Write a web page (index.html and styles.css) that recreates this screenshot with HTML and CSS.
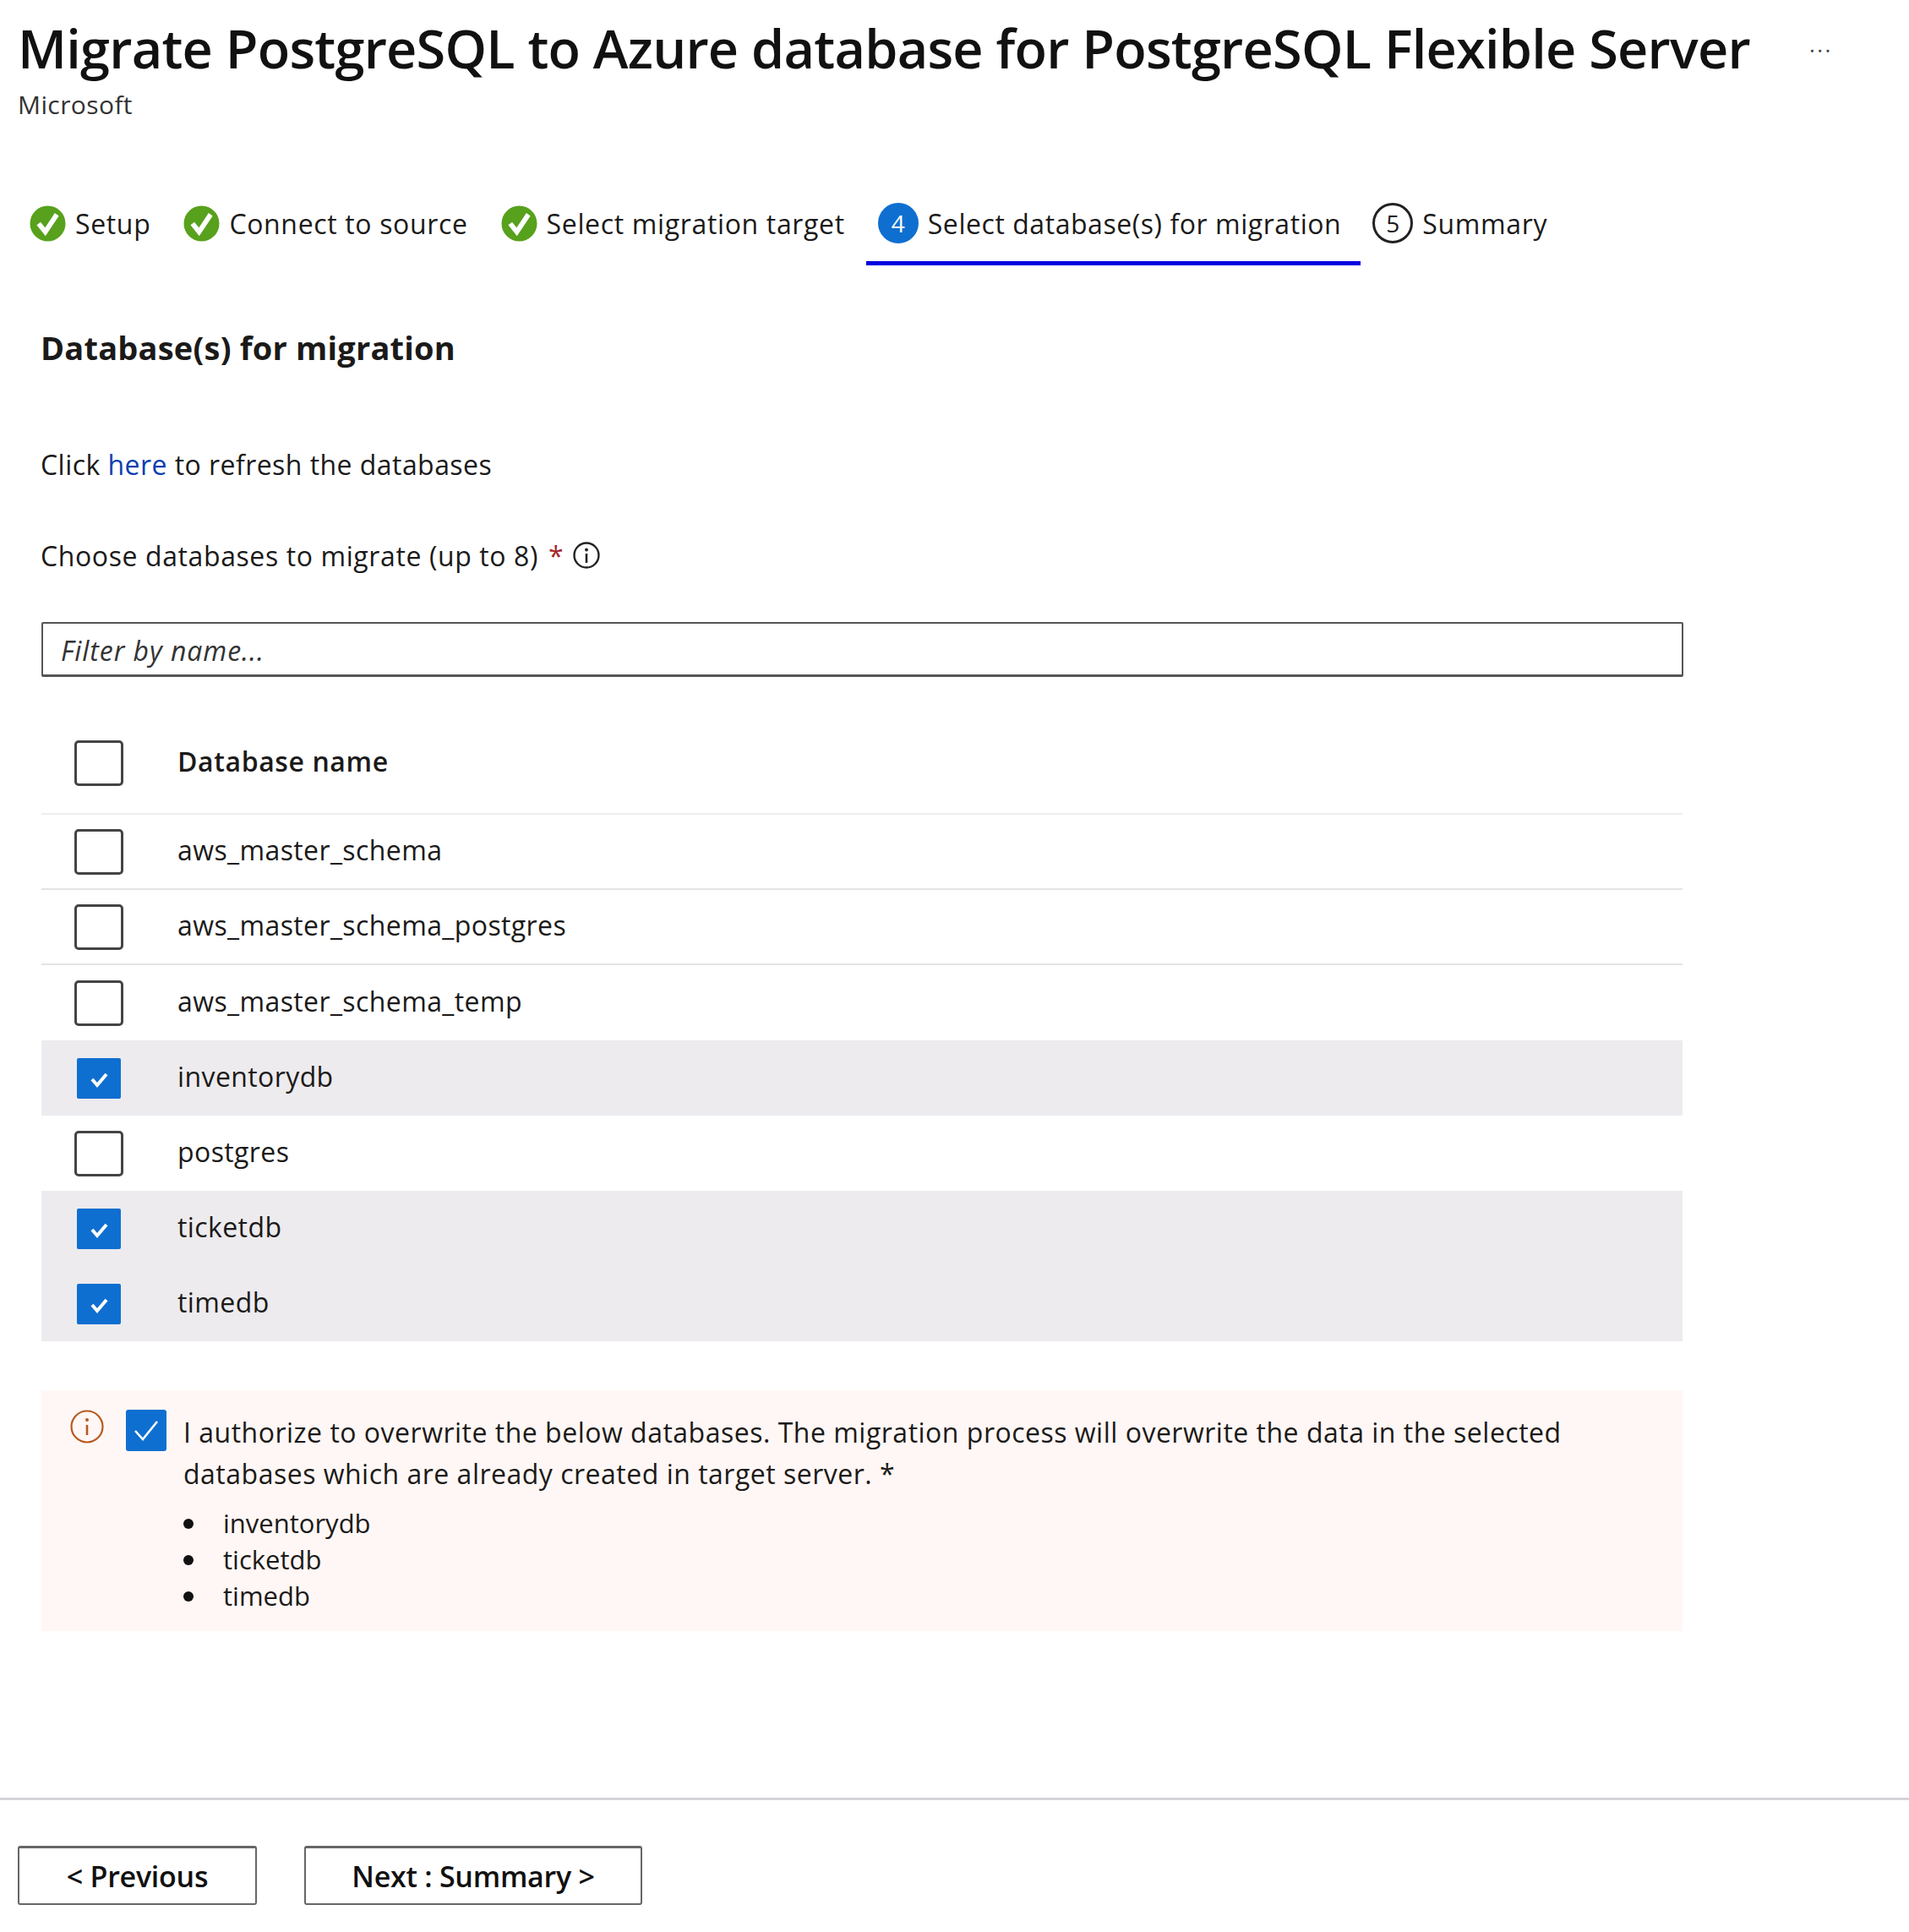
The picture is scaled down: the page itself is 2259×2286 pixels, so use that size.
FILE: index.html
```html
<!DOCTYPE html>
<html>
  <head>
    <meta charset="utf-8" />
    <title>Migrate PostgreSQL to Azure database for PostgreSQL Flexible Server</title>
    <link rel="stylesheet" href="styles.css">
  </head>

  <body>
    <header class="page-header">
      <div class="title-row">
        <h1>Migrate PostgreSQL to Azure database for PostgreSQL Flexible Server</h1>
        <span class="more">...</span>
      </div>
      <div class="publisher">Microsoft</div>
    </header>

    <nav class="tabs">
      <div class="tab">
        <svg class="step-done" viewBox="0 0 44 44"><circle cx="22" cy="22" r="21.5" fill="#57a11c"/><path d="M11 22l8 10 14-21" fill="none" stroke="#fff" stroke-width="6"/></svg>
        <span>Setup</span>
      </div>
      <div class="tab">
        <svg class="step-done" viewBox="0 0 44 44"><circle cx="22" cy="22" r="21.5" fill="#57a11c"/><path d="M11 22l8 10 14-21" fill="none" stroke="#fff" stroke-width="6"/></svg>
        <span>Connect to source</span>
      </div>
      <div class="tab">
        <svg class="step-done" viewBox="0 0 44 44"><circle cx="22" cy="22" r="21.5" fill="#57a11c"/><path d="M11 22l8 10 14-21" fill="none" stroke="#fff" stroke-width="6"/></svg>
        <span>Select migration target</span>
      </div>
      <div class="tab active">
        <span class="step-num current">4</span>
        <span>Select database(s) for migration</span>
      </div>
      <div class="tab">
        <span class="step-num">5</span>
        <span>Summary</span>
      </div>
    </nav>

    <main class="content">
      <h2>Database(s) for migration</h2>

      <p class="refresh">Click <a href="#">here</a> to refresh the databases</p>

      <div class="choose">
        <span>Choose databases to migrate (up to 8)</span>
        <span class="req">*</span>
        <svg class="info" viewBox="0 0 34 34"><circle cx="17" cy="17" r="14.5" fill="none" stroke="#222" stroke-width="2.4"/><circle cx="17" cy="10.5" r="1.9" fill="#222"/><path d="M17 15v11" stroke="#222" stroke-width="2.6"/></svg>
      </div>

      <input class="filter" type="text" placeholder="Filter by name...">

      <div class="grid">
        <div class="row head">
          <div class="check-cell"><span class="cb"></span></div>
          <div class="name">Database name</div>
        </div>
        <div class="row lined">
          <div class="check-cell"><span class="cb"></span></div>
          <div class="name">aws_master_schema</div>
        </div>
        <div class="row lined">
          <div class="check-cell"><span class="cb"></span></div>
          <div class="name">aws_master_schema_postgres</div>
        </div>
        <div class="row">
          <div class="check-cell"><span class="cb"></span></div>
          <div class="name">aws_master_schema_temp</div>
        </div>
        <div class="row selected">
          <div class="check-cell"><span class="cb on"><svg viewBox="0 0 52 48"><path d="M18 25l6 7 11-13" fill="none" stroke="#fff" stroke-width="4"/></svg></span></div>
          <div class="name">inventorydb</div>
        </div>
        <div class="row">
          <div class="check-cell"><span class="cb"></span></div>
          <div class="name">postgres</div>
        </div>
        <div class="row selected">
          <div class="check-cell"><span class="cb on"><svg viewBox="0 0 52 48"><path d="M18 25l6 7 11-13" fill="none" stroke="#fff" stroke-width="4"/></svg></span></div>
          <div class="name">ticketdb</div>
        </div>
        <div class="row selected">
          <div class="check-cell"><span class="cb on"><svg viewBox="0 0 52 48"><path d="M18 25l6 7 11-13" fill="none" stroke="#fff" stroke-width="4"/></svg></span></div>
          <div class="name">timedb</div>
        </div>
      </div>

      <section class="notice">
        <svg class="notice-icon" viewBox="0 0 40 40"><circle cx="20" cy="20" r="18.5" fill="none" stroke="#b7591f" stroke-width="2.2"/><circle cx="20" cy="12" r="2" fill="#b7591f"/><path d="M20 18v12" stroke="#b7591f" stroke-width="2.6"/></svg>
        <span class="cb on notice-cb"><svg viewBox="0 0 48 49"><path d="M11 25l9 10 17-21" fill="none" stroke="#fff" stroke-width="2.6"/></svg></span>
        <div class="notice-text">
          <p>I authorize to overwrite the below databases. The migration process will overwrite the data in the selected databases which are already created in target server. *</p>
          <ul>
            <li>inventorydb</li>
            <li>ticketdb</li>
            <li>timedb</li>
          </ul>
        </div>
      </section>
    </main>

    <footer class="page-footer">
      <button class="btn btn-prev">&lt; Previous</button>
      <button class="btn btn-next">Next : Summary &gt;</button>
    </footer>
  </body>
</html>
```

FILE: styles.css
```css
body {
  margin: 0;
  width: 2259px;
  height: 2286px;
  display: flex;
  flex-direction: column;
  background: #fff;
  color: #1b1a19;
  font-family: "Open Sans", "Noto Sans", sans-serif;
  font-size: 32px;
  letter-spacing: 0.4px;
  overflow: hidden;
}

/* Header */
.page-header {
  padding: 15px 0 0 21px;
}

.title-row {
  display: flex;
  align-items: center;
}

h1 {
  margin: 0;
  font-size: 63px;
  line-height: 84px;
  font-weight: 600;
  letter-spacing: -0.76px;
  color: #111;
  white-space: nowrap;
}

.more {
  margin: -10px 0 0 70px;
  font-size: 26px;
  letter-spacing: 2.5px;
  color: #444;
}

.publisher {
  margin-top: 5px;
  font-size: 30px;
  line-height: 40px;
  letter-spacing: 0.4px;
  color: #333;
}

/* Steps */
.tabs {
  display: flex;
  margin: 90px 0 0 21px;
}

.tab {
  display: flex;
  align-items: center;
  gap: 11px;
  height: 60px;
  padding: 0 25px 20px 14px;
  white-space: nowrap;
  letter-spacing: 0.65px;
}

.tab.active {
  border-bottom: 5px solid #0000e0;
  padding-bottom: 15px;
  padding-right: 23px;
  letter-spacing: 0.55px;
}

.step-done {
  width: 43px;
  height: 43px;
  flex: none;
}

.step-num {
  width: 48px;
  height: 48px;
  box-sizing: border-box;
  flex: none;
  display: flex;
  align-items: center;
  justify-content: center;
  border: 3px solid #222;
  border-radius: 50%;
  font-size: 28px;
  letter-spacing: 0;
}

.step-num.current {
  background: #0f6fd0;
  border-color: #0f6fd0;
  color: #fff;
}

/* Main form */
.content {
  flex: 1;
  padding: 0 268px 0 48px;
}

h2 {
  margin: 71px 0 0;
  font-size: 38px;
  line-height: 52px;
  font-weight: 700;
  letter-spacing: 0.2px;
}

.refresh {
  margin: 91px 0 0;
  line-height: 44px;
  letter-spacing: 0.45px;
}

.refresh a {
  color: #0b3fb0;
  text-decoration: none;
}

.choose {
  display: flex;
  align-items: center;
  margin-top: 63px;
  height: 44px;
  letter-spacing: 0.6px;
}

.req {
  margin-left: 12px;
  color: #a4262c;
}

.info {
  width: 34px;
  height: 34px;
  margin-left: 10px;
}

.filter {
  display: block;
  box-sizing: border-box;
  width: 1943px;
  height: 65px;
  margin: 57px 0 0 1px;
  padding: 2px 21px 0;
  border: 2px solid #555;
  border-bottom-width: 3px;
  border-radius: 2px;
  font: italic 32px "Open Sans", sans-serif;
  letter-spacing: 0.95px;
}

.filter::placeholder {
  color: #333;
  opacity: 1;
}

/* Database grid */
.grid {
  width: 1942px;
  margin: 43px 0 0 1px;
}

.row {
  display: flex;
  align-items: center;
  height: 89px;
}

.row.head {
  height: 120px;
  border-bottom: 2px solid #eeedee;
  box-sizing: border-box;
  font-weight: 600;
  letter-spacing: 0.6px;
}

.row.lined {
  box-sizing: border-box;
  border-bottom: 2px solid #e4e3e5;
}

.row.selected {
  background: #edebee;
}

.name {
  padding-bottom: 5px;
}

.check-cell {
  display: flex;
  justify-content: center;
  width: 136px;
  margin-right: 25px;
}

.cb {
  display: block;
  box-sizing: border-box;
  width: 58px;
  height: 54px;
  border: 3px solid #444;
  border-radius: 5px;
  background: #fff;
}

.cb.on {
  width: 52px;
  height: 48px;
  border: 0;
  border-radius: 2px;
  background: #0f6fd0;
}

.cb svg {
  display: block;
  width: 100%;
  height: 100%;
}

/* Overwrite notice */
.notice {
  display: flex;
  align-items: flex-start;
  width: 1942px;
  height: 285px;
  box-sizing: border-box;
  margin: 58px 0 0 1px;
  padding: 23px 0 0 34px;
  background: #fff7f5;
}

.notice-icon {
  width: 40px;
  height: 40px;
  flex: none;
}

.cb.notice-cb {
  width: 48px;
  height: 49px;
  flex: none;
  margin-left: 26px;
  border-radius: 3px;
}

.notice-text {
  margin-left: 20px;
  width: 1660px;
}

.notice-text p {
  margin: 2px 0 0;
  line-height: 49px;
  letter-spacing: 0.5px;
}

.notice-text ul {
  margin: 13px 0 0;
  padding: 0;
  list-style: none;
  font-size: 31px;
  letter-spacing: 0;
}

.notice-text li {
  display: flex;
  align-items: center;
  gap: 35px;
  line-height: 43px;
}

.notice-text li::before {
  content: "";
  width: 12px;
  height: 12px;
  border-radius: 50%;
  background: #111;
}

/* Footer */
.page-footer {
  display: flex;
  gap: 56px;
  height: 159px;
  box-sizing: border-box;
  padding: 54px 0 0 21px;
  border-top: 3px solid #d5d3d9;
}

.btn {
  height: 70px;
  box-sizing: border-box;
  border: 2px solid #666;
  border-top-width: 3px;
  border-radius: 3px;
  background: #fff;
  color: #111;
  font: 600 34px "Open Sans", sans-serif;
  letter-spacing: -0.25px;
}

.btn-prev {
  width: 283px;
}

.btn-next {
  width: 400px;
}
```
